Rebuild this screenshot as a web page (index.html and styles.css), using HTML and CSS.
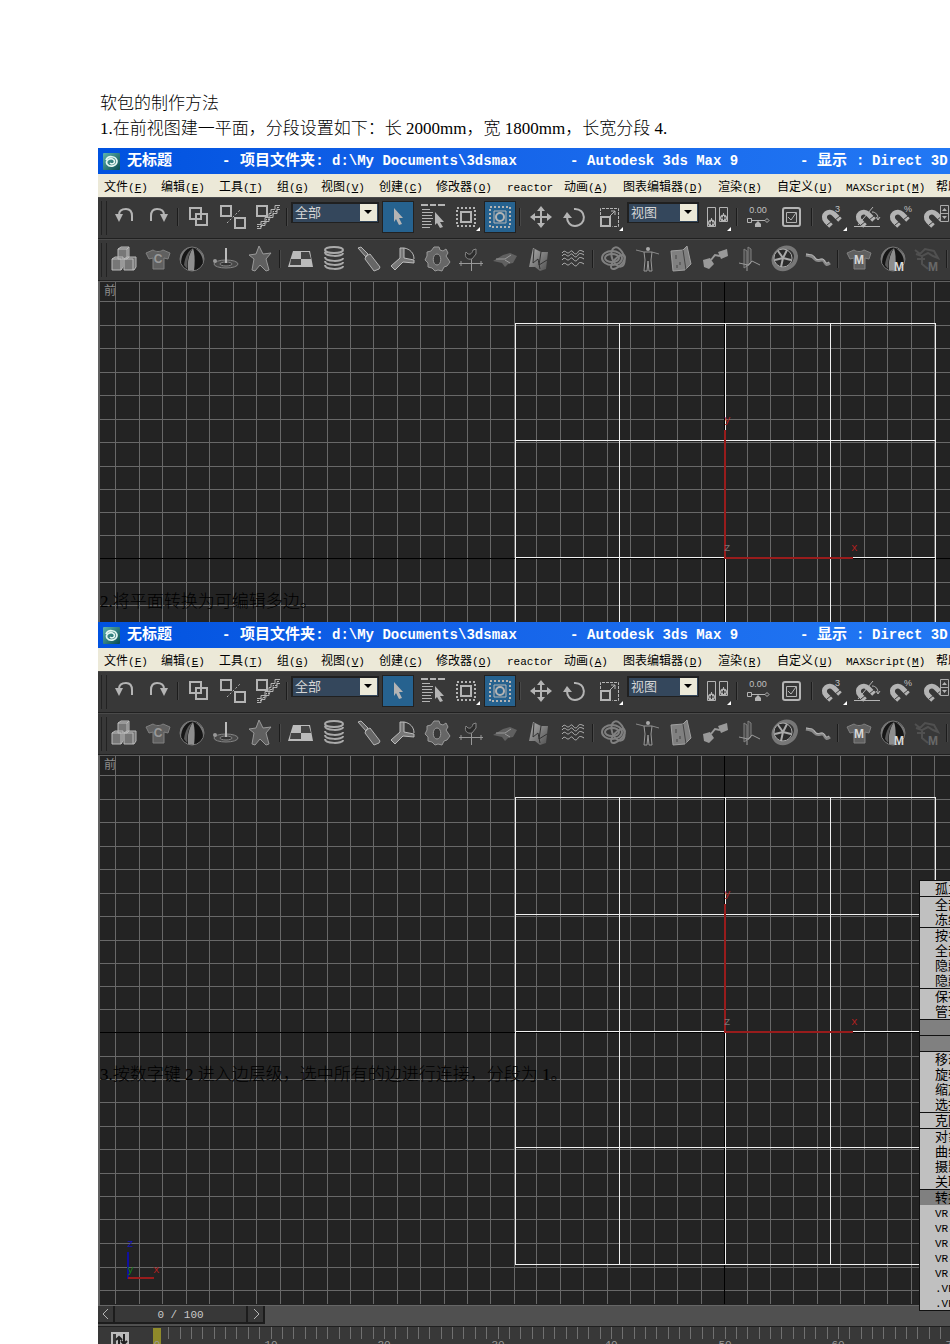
FILE: index.html
```html
<!DOCTYPE html>
<html lang="zh-CN">
<head>
<meta charset="utf-8">
<title>软包的制作方法</title>
<link rel="stylesheet" href="styles.css">
</head>
<body>
<svg class="paints" aria-hidden="true">
  <linearGradient id="metal" x1="0" y1="0" x2="1" y2="1"><stop offset="0" stop-color="#b0b0b0"/><stop offset="1" stop-color="#505050"/></linearGradient>
  <linearGradient id="teal" x1="0" y1="0" x2="1" y2="1"><stop offset="0" stop-color="#5fb5ae"/><stop offset="1" stop-color="#054a50"/></linearGradient>
</svg>
<svg class="symbols" aria-hidden="true">
  <symbol id="i-logo" viewBox="0 0 17 17"><rect width="17" height="17" rx="1" fill="url(#teal)"/><path d="M3 7c2-5 10-4 11 1 0 5-7 7-10 3-2-4 4-7 7-4 2 3-2 5-4 3" fill="none" stroke="#e5f7f2" stroke-width="1.7"/></symbol>
  <symbol id="i-undo" viewBox="0 0 28 28"><path class="l2" d="M9 12C9 8 12 6 16 6c5 0 6 3 6 7v5"/><path class="f" d="M5 11h8l-4 8z"/></symbol>
  <symbol id="i-redo" viewBox="0 0 28 28"><path class="l2" d="M20 12C20 8 17 6 13 6c-5 0-6 3-6 7v5"/><path class="f" d="M16 11h8l-4 8z"/></symbol>
  <symbol id="i-link" viewBox="0 0 28 28"><path class="l2" d="M5 5h11v11H5zM11 11h11v11H11z"/></symbol>
  <symbol id="i-unlink" viewBox="0 0 28 28"><path class="l2" d="M2 3h10v10H2zM16 15h10v10H16z"/><path class="l" stroke-dasharray="2 2" d="M8 20L21 7"/></symbol>
  <symbol id="i-bind" viewBox="0 0 28 28"><path class="l2" d="M4 3h10v10H4z"/><path class="l" d="M27 2.500h-5v4h-4v4h-2v4h-4v4H8v3H4M27 6.500h-3v4h-4v4h-4v4h-4v4H8v3H4"/><path class="l" stroke-dasharray="2 1" d="M26 4.500h-2v4h-4v4h-3v4h-4v4H9v3H4"/></symbol>
  <symbol id="i-select" viewBox="0 0 28 28"><path class="f" d="M10 5l9 10h-4l3 6-3 1-3-6-2 3z"/></symbol>
  <symbol id="i-byname" viewBox="0 0 28 28"><path class="l2" d="M3 2h7M12 2h6M20 2h7"/><path class="l" d="M4 6.500h8M4 9.500h11M4 12.500h10M4 15.500h11M4 18.500h9M4 21.500h10M4 24.500h8"/><path class="f" d="M17 9l9 10h-4l3 5-3 1-3-5-2 2z"/></symbol>
  <symbol id="i-region" viewBox="0 0 28 28"><path class="l2" stroke-dasharray="2 2" d="M5 5h18v18H5z"/><path class="l2" d="M9 9h10v10H9z"/><path fill="#fff" d="M28 24v4h-4z"/></symbol>
  <symbol id="i-window" viewBox="0 0 28 28"><path class="l2" stroke-dasharray="2 2" d="M4 4h20v20H4z"/><path class="l" d="M8 8h12v12H8z"/><circle class="l2" cx="14" cy="14" r="4"/></symbol>
  <symbol id="i-move" viewBox="0 0 28 28"><path class="l2" d="M14 6v16M6 14h16"/><path class="f" d="M14 3l4 5h-8zM14 25l4-5h-8zM3 14l5-4v8zM25 14l-5-4v8z"/></symbol>
  <symbol id="i-rotate" viewBox="0 0 28 28"><path class="l2" d="M13 6c13-1 13 17 1 17-5 0-8-4-8-9"/><path class="f" d="M2 15l4-6 5 6z"/></symbol>
  <symbol id="i-scale" viewBox="0 0 28 28"><path class="l" stroke-dasharray="3 1" d="M5.500 12V5.500h18v18h-6"/><path class="l2" d="M6 14h9v9H6z"/><path class="l" d="M15 13l5-5m-4 0h4v4"/><path fill="#fff" d="M28 24v4h-4z"/></symbol>
  <symbol id="i-pivot" viewBox="0 0 28 28"><path class="l" d="M4.500 4.500h8v19h-8zM16.500 4.500h8v14h-8z"/><circle class="f" cx="8.500" cy="20" r="3.500"/><circle class="f" cx="20.500" cy="15" r="3.500"/><path class="l" d="M8.500 15v4M20.500 10v4"/><path stroke="#333" d="M6 20h5M8.500 18v4M18 15h5M20.500 13v4"/><path fill="#fff" d="M28 24v4h-4z"/></symbol>
  <symbol id="i-manip" viewBox="0 0 28 28"><text class="num" x="14" y="10" text-anchor="middle">0.00</text><path class="l" d="M3.500 15.500h4v4h-4zM7 17.500h14M21 17.500l2-2 2 2-2 2z"/><path class="f" d="M14 18l3 3v3h-6v-3z"/></symbol>
  <symbol id="i-check" viewBox="0 0 28 28"><rect class="l2" x="5" y="5" width="17" height="18" rx="2"/><path class="l" d="M8.500 9.500h10v10h-10zM10 14l3 3 5-7"/></symbol>
  <symbol id="i-mag" viewBox="0 0 28 28"><path fill="none" stroke="#b4b4b4" stroke-width="5" d="M12 23L7 18c-5-6 3-12 8-7l6 6"/><path stroke="#3a3a3a" d="M8 22l5-4M16 17l5-4"/></symbol>
  <symbol id="i-snap" viewBox="0 0 28 28"><use href="#i-mag"/><text class="num" x="16" y="9">3</text><path fill="#fff" d="M28 24v4h-4z"/></symbol>
  <symbol id="i-angle" viewBox="0 0 28 28"><use href="#i-mag"/><path class="l" d="M1 23.500h26M5 22L20 4M19 9c4 0 6 3 6 7m-2-2l2 3 2-3"/></symbol>
  <symbol id="i-percent" viewBox="0 0 28 28"><use href="#i-mag"/><text class="num" x="17" y="9">%</text></symbol>
  <symbol id="i-spinner" viewBox="0 0 28 28"><use href="#i-mag"/><path fill="#3a3a3a" stroke="#aaa" d="M19.500 2.500h8v16h-8zM19.500 10.500h8"/><path class="f" d="M21 8l2.500-3L26 8zM21 13h5l-2.500 3z"/></symbol>

  <symbol id="i-boxes" viewBox="0 0 28 28"><path fill="#777" stroke="#bbb" d="M8 4l3-2h8v10l-2 2H8zM8 4h9v10M17 4l2-2M2 14l3-2h8v10l-2 3H2zM2 14h9v11M14 14l3-2h9v10l-2 3H14zM14 14h9v11"/></symbol>
  <symbol id="i-shirt" viewBox="0 0 28 28"><path fill="#606060" stroke="#808080" d="M9 5c3 2 7 2 10 0l7 3-2 6-4-1v11H9V13l-4 1-3-6z"/></symbol>
  <symbol id="i-cloth" viewBox="0 0 28 28"><use href="#i-shirt"/><text class="mark dim" x="14" y="18" text-anchor="middle">C</text></symbol>
  <symbol id="i-ball" viewBox="0 0 28 28"><circle cx="14" cy="14" r="12" fill="#161616" stroke="#777"/><path fill="#7c7c7c" d="M15 2C8 3 3 9 3 19l-1-5C2 7 8 2 15 2z"/><path fill="#8e8e8e" d="M15 3c-4 6-6 14-5 22l6 1c1-9 1-17-1-23z"/><path fill="#585858" d="M15 3c-5 3-8 9-9 17l3 4c0-9 2-16 6-21z"/><path fill="#777" d="M16 3c6 3 9 9 9 15l1-5c-1-6-5-9-10-10z"/></symbol>
  <symbol id="i-float" viewBox="0 0 28 28"><ellipse cx="14" cy="19" rx="12" ry="4" fill="#484848" stroke="#858585"/><ellipse cx="14" cy="19" rx="6" ry="2" fill="#333" stroke="#888"/><path stroke="#bbb" stroke-width="2" d="M14 3v15"/><circle cx="3" cy="16" r="2" fill="#999"/></symbol>
  <symbol id="i-star" viewBox="0 0 28 28"><path fill="#606060" stroke="#999" stroke-linejoin="round" d="M13 1l4 8 8-1-5 6 3 11-3 1-6-6-5 6-3-1 2-11-5-4 7-1z"/></symbol>
  <symbol id="i-plane" viewBox="0 0 28 28"><path fill="#bbb" d="M6 6h17l3 16H1z"/><path fill="#444" d="M14 7h8l2 7H14zM4 14h10v6H3z"/></symbol>
  <symbol id="i-spring" viewBox="0 0 28 28"><g fill="none" stroke="#aaa" stroke-width="2"><ellipse cx="13" cy="5" rx="9" ry="3"/><path d="M4 7c0 5 18 5 18 1M4 12c0 5 18 5 18 1M4 16c0 5 18 5 18 1M4 20c0 5 18 5 18 1"/></g></symbol>
  <symbol id="i-dash" viewBox="0 0 28 28"><path fill="#666" stroke="#b5b5b5" d="M3 3l3-1 7 7-2 3zM11 11l4-2 10 13-1 2-5 2-9-12z"/></symbol>
  <symbol id="i-hinge" viewBox="0 0 28 28"><path fill="#777" stroke="#bbb" d="M2 21l9-8V3h4v10l10 2v3l-11-1-8 8z"/><path fill="none" stroke="#bbb" d="M15 3c6 1 10 5 10 11"/></symbol>
  <symbol id="i-gear" viewBox="0 0 28 28"><path fill="#666" stroke="#999" fill-rule="evenodd" d="M11 2h5l1 3 3 1 3-2 2 4-2 3 2 3 2 3-3 4-3 1-2 4-4-1-3 1-3-3-4-1v-4l-3-3 2-4v-4l4-1zM14 9c-5 0-5 11 0 11s5-11 0-11z"/></symbol>
  <symbol id="i-vane" viewBox="0 0 28 28"><path stroke="#999" fill="none" d="M2 18.500h24M14.500 12v14M4 16v5M24 16v5"/><path fill="#2c2c2c" stroke="#888" d="M9 7c3 4 6 2 7-2l3-1v5l-4 5c-5 1-8-2-6-7z"/></symbol>
  <symbol id="i-car" viewBox="0 0 28 28"><path fill="#606060" d="M2 16l10-6 7-2 7 3-4 7-5 1-3 3-3-4z"/><path stroke="#999" fill="none" d="M5 14h9l6-4M14 15l5 3"/></symbol>
  <symbol id="i-fracture" viewBox="0 0 28 28"><path fill="url(#metal)" d="M8 3l8 4 7 0-2 17-6 2-5-4-6 0z"/><path stroke="#333" fill="none" d="M9 4l-1 14 5-4 2 10M16 7l-2 13 8-5"/></symbol>
  <symbol id="i-water" viewBox="0 0 28 28"><path class="l" d="M3 8c3-4 4 0 6 0s3-4 5-1 4 2 5 0 3-2 6 0M3 11c3-4 4 0 6 0s3-4 5-1 4 2 5 0 3-2 6 0M3 15c3-4 4 0 6 0s3-4 5-1 4 2 5 0 3-2 6 0M3 20c3-4 4 0 6 0s3-4 5-1 4 2 5 0 3-2 6 0"/></symbol>
  <symbol id="i-knot" viewBox="0 0 28 28"><g fill="none" stroke="#808080" stroke-width="2"><ellipse cx="12" cy="13" rx="10" ry="7"/><ellipse cx="12" cy="13" rx="7" ry="4"/><ellipse cx="18" cy="12" rx="6" ry="10" transform="rotate(-20 18 12)"/><ellipse cx="18" cy="17" rx="4" ry="9" transform="rotate(45 18 17)"/></g></symbol>
  <symbol id="i-doll" viewBox="0 0 28 28"><circle cx="14" cy="4" r="2" fill="#aaa"/><path stroke="#888" d="M2 5l8 2M18 7l7 2"/><path fill="#333" stroke="#999" d="M10 7h8l-1 8 1 11h-3l-1-10-1 10h-3l1-11z"/></symbol>
  <symbol id="i-panel" viewBox="0 0 28 28"><path fill="#808080" stroke="#a0a0a0" d="M3 6l12-1 4-4 4 18-6 6-12 1z"/><path stroke="#444" d="M15 5l3 20M8 10v4M12 17v3M9 20v3"/></symbol>
  <symbol id="i-motor" viewBox="0 0 28 28"><path fill="#999" d="M1 15l7-2 4 6-5 5-5-2zM16 7l9-3 1 7-7 3z"/><path stroke="#999" stroke-width="2" fill="none" d="M9 15l4-5 5 1"/></symbol>
  <symbol id="i-wind" viewBox="0 0 28 28"><path fill="#484848" stroke="#808080" d="M8 4l3 2v15l-3 2zM12 2l3 2v14l-3 3z"/><path stroke="#999" fill="none" d="M3 18l9 2 4-4 8 4M11 20v6"/></symbol>
  <symbol id="i-wheel" viewBox="0 0 28 28"><ellipse cx="15" cy="14" rx="12" ry="10" fill="#343434" stroke="#777" stroke-width="4" transform="rotate(-40 14 14)"/><circle cx="13" cy="13" r="9" fill="#2b2b2b" stroke="#aaa"/><path stroke="#aaa" stroke-width="2" d="M13 13l4-8M13 13l8 2M13 13l-2 9M13 13l-8 2M13 13L8 6"/></symbol>
  <symbol id="i-rope" viewBox="0 0 28 28"><path fill="none" stroke="#888" stroke-width="3" d="M2 10c4 1 6 0 9 4s7-1 9 2 2 5 6 2"/><path stroke="#bbb" fill="none" d="M2 9c5 1 7 0 9 4s7-1 9 2 1 4 5 2"/></symbol>
  <symbol id="i-clothm" viewBox="0 0 28 28"><use href="#i-shirt"/><text class="mark" x="14" y="19" text-anchor="middle">M</text></symbol>
  <symbol id="i-ballm" viewBox="0 0 28 28"><use href="#i-ball"/><text class="mark" x="15" y="26">M</text></symbol>
  <symbol id="i-ropem" viewBox="0 0 28 28"><g opacity=".3"><path fill="none" stroke="#888" stroke-width="2" d="M2 5l5 4 5-5 9 2 4 7-5-2-5-3-6 3v8l6 5M4 14h8M3 9l6 2"/><text class="mark" x="15" y="26">M</text></g></symbol>

  <symbol id="scene" viewBox="0 0 1200 549">
    <path class="grid-line" d="M17.500 0V549M41.500 0V549M64.500 0V549M88.500 0V549M111.500 0V549M135.500 0V549M158.500 0V549M182.500 0V549M205.500 0V549M229.500 0V549M252.500 0V549M275.500 0V549M299.500 0V549M322.500 0V549M346.500 0V549M369.500 0V549M392.500 0V549M416.500 0V549M438.500 0V549M462.500 0V549M485.500 0V549M509.500 0V549M532.500 0V549M556.500 0V549M579.500 0V549M603.500 0V549M649.500 0V549M672.500 0V549M695.500 0V549M719.500 0V549M742.500 0V549M766.500 0V549M789.500 0V549M813.500 0V549M836.500 0V549M860.500 0V549M883.500 0V549"/>
    <path class="grid-line" d="M0 20.500H1200M0 44.500H1200M0 67.500H1200M0 91.500H1200M0 114.500H1200M0 138.500H1200M0 161.500H1200M0 185.500H1200M0 208.500H1200M0 231.500H1200M0 254.500H1200M0 301.500H1200M0 324.500H1200M0 347.500H1200M0 371.500H1200M0 394.500H1200M0 418.500H1200M0 441.500H1200M0 464.500H1200M0 488.500H1200M0 512.500H1200M0 535.500H1200"/>
    <path stroke="#000" d="M626.500 0V549M0 277.500H1200"/>
    <path fill="none" stroke="#f0f0f0" d="M417.500 42.500H837.500V509.500H417.500zM521.500 42V509M627.500 42V149M627.500 276V509M732.500 42V509M417 159.500H837M417 276.500H837M417 392.500H837"/>
    <path stroke="#981c1c" stroke-width="2" d="M627 149V278M626 277H755"/>
    <text class="axis red" x="626" y="142">y</text><text class="axis gray" x="626" y="270">z</text><text class="axis red" x="753" y="270">x</text>
  </symbol>
</svg>

<main class="page">
  <h1 class="line">软包的制作方法</h1>
  <p class="line"><span>1.</span>在前视图建一平面，分段设置如下：长<span> 2000mm</span>，宽<span> 1800mm</span>，长宽分段<span> 4.</span></p>

  <section class="shot shot-short">
    <div class="app"></div>
    <div class="viewport">
      <svg class="scene" aria-hidden="true"><use href="#scene" width="1200" height="549"/></svg>
      <span class="view-name">前</span>
    </div>
    <p class="line over"><span>2.</span>将平面转换为可编辑多边。</p>
  </section>

  <section class="shot shot-tall">
    <div class="app"></div>
    <div class="viewport">
      <svg class="scene" aria-hidden="true"><use href="#scene" width="1200" height="549"/>
        <path stroke="#1010a0" stroke-width="2" d="M30 497V524"/><path stroke="#981c1c" stroke-width="2" d="M30 523H56"/>
        <text class="axis blue" x="29" y="492">z</text><text class="axis green" x="29" y="518">y</text><text class="axis red" x="55" y="518">x</text>
      </svg>
      <span class="view-name">前</span>
    </div>
    <div class="slider">
      <button class="step" aria-label="上一帧"><svg viewBox="0 0 12 12"><path class="l" d="M8 1L3 6l5 5"/></svg></button>
      <button class="thumb">0 / 100</button>
      <button class="step" aria-label="下一帧"><svg viewBox="0 0 12 12"><path class="l" d="M4 1l5 5-5 5"/></svg></button>
    </div>
    <div class="track">
      <button class="curve" aria-label="迷你曲线编辑器"><svg viewBox="0 0 18 16"><path fill="#bbb" d="M0 0h18v16H0z"/><path fill="#383838" d="M2 2h3v14H2z"/><path stroke="#222" stroke-width="2" fill="none" d="M8 16V7M13 2v9M5 8l3-3 3 3M10 9l3 3 3-3"/></svg></button>
      <svg class="ruler" aria-hidden="true"></svg>
    </div>
    <p class="line over"><span>3.</span>按数字键<span> 2 </span>进入边层级，选中所有的边进行连接，分段为<span> 1</span>。</p>
    <nav class="quad" aria-label="四元菜单">
      <ul><li>孤立当前选择</li></ul>
      <ul><li>全部解冻</li><li>冻结当前选择</li></ul>
      <ul><li>按名称取消隐藏</li><li>全部取消隐藏</li><li>隐藏未选定对象</li><li>隐藏当前选择</li></ul>
      <ul><li>保存场景状态</li><li>管理场景状态</li></ul>
      <ul class="band"><li></li></ul>
      <ul class="band"><li></li></ul>
      <ul><li>移动</li><li>旋转</li><li>缩放</li><li>选择</li></ul>
      <ul><li>克隆</li></ul>
      <ul><li>对象属性</li><li>曲线编辑器</li><li>摄影表</li><li>关联参数</li></ul>
      <ul><li class="hot">转换为</li><li><b>VR-</b>属性</li><li><b>VR-</b>场景</li><li><b>VR-</b>网格</li><li><b>VR-</b>位图</li><li><b>VR-</b>灯光</li><li><b>.VR</b>场景</li><li><b>.VR</b>动画</li></ul>
    </nav>
  </section>
</main>

<template id="shell">
  <header class="title">
    <svg class="logo"><use href="#i-logo"/></svg>
    <span class="cjk">无标题</span><span>-</span><span class="cjk">项目文件夹:</span><span>d:\My Documents\3dsmax</span><span>-</span><span>Autodesk 3ds Max 9</span><span>-</span><span class="cjk">显示</span><span>:</span><span>Direct 3D</span>
  </header>
  <nav class="menu">
    <a href="#">文件<b>(<u>F</u>)</b></a><a href="#">编辑<b>(<u>E</u>)</b></a><a href="#">工具<b>(<u>T</u>)</b></a><a href="#">组<b>(<u>G</u>)</b></a><a href="#">视图<b>(<u>V</u>)</b></a><a href="#">创建<b>(<u>C</u>)</b></a><a href="#">修改器<b>(<u>O</u>)</b></a><a href="#"><b>reactor</b></a><a href="#">动画<b>(<u>A</u>)</b></a><a href="#">图表编辑器<b>(<u>D</u>)</b></a><a href="#">渲染<b>(<u>R</u>)</b></a><a href="#">自定义<b>(<u>U</u>)</b></a><a href="#"><b>MAXScript(<u>M</u>)</b></a><a href="#">帮助<b>(<u>H</u>)</b></a>
  </nav>
  <div class="bar" data-tools="undo redo | link unlink bind | #全部 select* byname region window* | move rotate scale #视图 pivot | manip check | snap angle percent spinner"></div>
  <div class="bar" data-tools="boxes cloth ball float star | plane spring dash hinge gear vane car fracture water | knot doll panel motor wind wheel rope | clothm ballm ropem |"></div>
</template>
<script src="app.js"></script>
</body>
</html>
```
FILE: styles.css
```css
* { box-sizing: border-box; }
body { margin: 0; background: #fff; overflow-x: hidden; }
.paints { position: absolute; width: 0; height: 0; }
.symbols { display: none; }

.page { padding: 89px 0 0 98px; }
.line {
  margin: 0; padding-left: 2px;
  font: 300 17px/25px "Noto Sans CJK SC", sans-serif;
  color: #000; white-space: nowrap;
}
.line span { font: 400 17px/20px "Liberation Serif", serif; white-space: pre; }
.page > p.line { margin-bottom: 9px; }

.shot { position: relative; display: flex; flex-direction: column; overflow: hidden; background: #383838; }
.shot-short .viewport { height: 341px; }
.shot-tall .viewport { height: 550px; }
.over { position: absolute; left: 0; }
.shot-short .over { bottom: 10px; }
.shot-tall .over { top: 438px; }

.title {
  display: grid;
  grid-template-columns: 29px 95px 18px 92px 238px 17px 213px 17px 39px 16px 1fr;
  align-items: baseline; height: 26px;
  background: linear-gradient(90deg, #0052e0, #1462e8 40%, #2278f4);
  color: #fff; font: bold 14px/26px "Liberation Mono", "Noto Sans CJK SC", monospace;
  white-space: nowrap;
}
.title .cjk { font-size: 15px; }
.logo { align-self: center; width: 17px; height: 17px; margin-left: 5px; }

.menu {
  display: grid;
  grid-template-columns: 57px 58px 58px 44px 58px 57px 71px 57px 59px 95px 59px 69px 90px 1fr;
  height: 23px; padding-left: 6px; background: #ece9d8;
  font: 12px/24px "Noto Sans CJK SC", sans-serif; white-space: nowrap;
}
.menu a { color: #000; text-decoration: none; }
.menu b, .quad b { font: 11px "Liberation Mono", monospace; }

.bar {
  display: flex; align-items: center; height: 42px; padding: 0 0 2px 9px;
  background: #383838; border-top: 1px solid #4a4a4a; border-bottom: 1px solid #202020;
  position: relative;
}
.bar::before {
  content: ""; position: absolute; left: 3px; top: 3px; bottom: 3px; width: 4px;
  border: solid #222; border-width: 0 1px;
}
.tool { flex: none; display: grid; place-items: center; width: 34px; height: 32px; padding: 0; border: 0; background: none; }
.tool svg { width: 28px; height: 28px; }
.tool.on { border: 1px solid #222; background: #26628f; width: 32px; margin: 0 1px; }
.sep { flex: none; width: 2px; height: 18px; margin: 0 3px 0 2px; border-left: 1px solid #1c1c1c; border-right: 1px solid #484848; }

.combo { flex: none; position: relative; width: 88px; height: 21px; margin: 0 2px 10px 0; }
.combo.small { width: 72px; margin: 0 1px 10px 1px; }
.combo select {
  appearance: none; display: block; width: 100%; height: 100%; padding: 0 0 2px 2px;
  border: solid #202020; border-width: 2px 1px 1px 2px; border-radius: 0;
  background: #34475c; color: #d5d5d5; font: 13px/16px "Noto Sans CJK SC", sans-serif;
}
.combo svg { position: absolute; right: 2px; top: 2px; width: 17px; height: 17px; pointer-events: none; }

.l, .l2 { fill: none; stroke: #b4b4b4; stroke-width: 1; }
.l2 { stroke-width: 2; }
.f { fill: #b4b4b4; }
.num { font: 9px "Liberation Sans", sans-serif; fill: #c0c0c0; }
.mark { font: bold 12px "Liberation Sans", sans-serif; fill: #d8d8d8; }
.mark.dim { fill: #999; }

.viewport { position: relative; overflow: hidden; background: #232323; border: solid #606060; border-width: 1px 0 0 2px; }
.scene { display: block; width: 1200px; height: 550px; margin: -1px 0 0 -2px; shape-rendering: crispEdges; }
.grid-line { stroke: #686868; }
.axis { font: 11px "Liberation Mono", monospace; }
.red { fill: #b02020; }
.gray { fill: #777; }
.blue { fill: #1414b8; }
.green { fill: #168016; }
.view-name { position: absolute; left: 4px; top: -1px; color: #8c8c8c; font: 12px/17px "Noto Sans CJK SC", sans-serif; }

.slider { display: flex; height: 21px; padding-bottom: 2px; background: #505050; border-top: 1px solid #666; }
.slider button { border: solid #1c1c1c; border-width: 0 2px 2px 0; background: #383838; padding: 0; }
.step { width: 17px; }
.step svg { display: block; width: 12px; height: 12px; margin: auto; }
.slider .thumb { width: 133px; padding-top: 2px; color: #c8c8c8; font: 11px/14px "Liberation Mono", monospace; }
.track { display: flex; height: 18px; overflow: hidden; background: #383838; border-top: 1px solid #202020; }
.curve { width: 18px; height: 16px; margin: 5px 0 0 13px; padding: 0; border: 0; background: none; }
.curve svg { display: block; width: 18px; height: 16px; }
.ruler { flex: 1; height: 30px; }
.ruler text { font: 11px "Liberation Mono", monospace; fill: #999; }

.quad {
  position: absolute; left: 821px; top: 258px; width: 150px;
  border: 1px solid #111; background: #c0c0c0;
  font: 13px/13px "Noto Sans CJK SC", sans-serif; white-space: nowrap;
}
.quad ul { list-style: none; margin: 0; padding: 0; }
.quad ul + ul { border-top: 1px solid #111; }
.quad li { height: 15px; padding-left: 15px; }
.quad .band, .quad .hot { background: #808080; }
```
FILE: app.js
```js
const icon = (name) => `<svg aria-hidden="true"><use href="#i-${name}"/></svg>`;

function tool(token) {
  if (token === "|") return '<span class="sep"></span>';
  if (token[0] === "#") {
    const label = token.slice(1);
    const small = label === "视图";
    return `<span class="combo${small ? " small" : ""}"><select aria-label="${small ? "参考坐标系" : "选择过滤器"}"><option>${label}</option></select>` +
      '<svg viewBox="0 0 17 17"><path fill="#ece9d8" d="M0 0h17v17H0z"/><path fill="#000" d="M4 6h8l-4 4z"/></svg></span>';
  }
  const on = token.endsWith("*");
  const name = on ? token.slice(0, -1) : token;
  return `<button class="tool${on ? " on" : ""}" aria-label="${name}">${icon(name)}</button>`;
}

document.querySelectorAll(".app").forEach((app) => {
  app.append(document.getElementById("shell").content.cloneNode(true));
  app.querySelectorAll(".bar").forEach((bar) => {
    bar.innerHTML = bar.dataset.tools.split(" ").map(tool).join("");
  });
});

// Frame ruler: one tick per frame, a number every ten frames.
let marks = '<rect x="24" y="1" width="8" height="29" fill="#8f8a2a"/><text x="28" y="21" text-anchor="middle">0</text>';
for (let n = 1; n <= 70; n++) {
  const x = Math.round(28 + n * 11.35);
  marks += `<rect x="${x}" y="0" width="1" height="12" fill="#707070"/>`;
  if (n % 10 === 0) marks += `<text x="${x}" y="21" text-anchor="middle">${n}</text>`;
}
document.querySelector(".ruler").innerHTML = marks;
```
